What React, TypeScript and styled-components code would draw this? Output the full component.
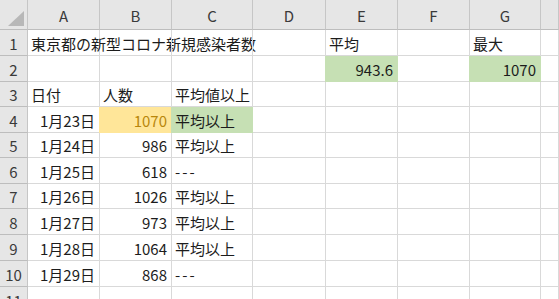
import React from "react";
import styled, { createGlobalStyle } from "styled-components";

const GlobalStyle = createGlobalStyle`
  html, body {
    margin: 0;
    padding: 0;
    background: #ffffff;
  }
  body {
    font-family: "Noto Sans CJK JP", "Noto Sans", sans-serif;
  }
`;

// row header + A..G, the H column takes whatever is left
const COLS = [28, 72, 72, 81, 73, 72, 72, 71];
const ROWS = [30, 26, 26, 25, 26, 25, 26, 25, 26, 26, 26, 26];
const LETTERS = ["A", "B", "C", "D", "E", "F", "G"];

const Sheet = styled.div`
  display: grid;
  grid-template-columns: ${COLS.map((c) => `${c}px`).join(" ")} 1fr;
  grid-template-rows: ${ROWS.map((r) => `${r}px`).join(" ")};
  width: 559px;
  height: 299px;
  overflow: hidden;
  color: #1c1c1c;
  font-size: 15px;
`;

const Head = styled.div`
  box-sizing: border-box;
  background: #e6e6e6;
  border-right: 1px solid #c6c6c6;
  border-bottom: 1px solid #bdbdbd;
  display: flex;
  align-items: center;
  justify-content: center;
  color: #3a3a3a;
  font-size: 15px;
  padding-top: 1px;
`;

const Corner = styled(Head)`
  position: relative;
  &::after {
    content: "";
    position: absolute;
    right: 3px;
    bottom: 3px;
    width: 0;
    height: 0;
    border-left: 16px solid transparent;
    border-bottom: 15px solid #b8b8b8;
  }
`;

type Tone = "green" | "yellow" | undefined;

const fills: Record<string, string> = {
  green: "#c6e0b4",
  yellow: "#ffe699",
};

const Cell = styled.div<{ $right?: boolean; $tone?: Tone; $dash?: boolean }>`
  box-sizing: border-box;
  border-right: 1px solid ${(p) => (p.$tone ? fills[p.$tone] : "#d9d9d9")};
  border-bottom: 1px solid ${(p) => (p.$tone ? fills[p.$tone] : "#d9d9d9")};
  background: ${(p) => (p.$tone ? fills[p.$tone] : "transparent")};
  box-shadow: ${(p) => (p.$tone ? `-1px 0 0 ${fills[p.$tone]}` : "none")};
  display: flex;
  align-items: center;
  justify-content: ${(p) => (p.$right ? "flex-end" : "flex-start")};
  padding: 1px ${(p) => (p.$right ? "4px" : "0")} 0 ${(p) => (p.$right ? "0" : "3px")};
  white-space: nowrap;
  letter-spacing: ${(p) => (p.$dash ? "2px" : "0")};
  color: ${(p) => (p.$tone === "yellow" ? "#b8860b" : "#1c1c1c")};
  position: relative;
  z-index: ${(p) => (p.$tone ? 1 : 0)};
`;

type CellData = { text?: string; right?: boolean; tone?: Tone };

const data: Record<number, Record<number, CellData>> = {
  1: { 0: { text: "東京都の新型コロナ新規感染者数" }, 4: { text: "平均" }, 6: { text: "最大" } },
  2: { 4: { text: "943.6", right: true, tone: "green" }, 6: { text: "1070", right: true, tone: "green" } },
  3: { 0: { text: "日付" }, 1: { text: "人数" }, 2: { text: "平均値以上" } },
};

const rowsData: [string, string, string][] = [
  ["1月23日", "1070", "平均以上"],
  ["1月24日", "986", "平均以上"],
  ["1月25日", "618", "---"],
  ["1月26日", "1026", "平均以上"],
  ["1月27日", "973", "平均以上"],
  ["1月28日", "1064", "平均以上"],
  ["1月29日", "868", "---"],
];

rowsData.forEach(([d, n, s], i) => {
  const r = i + 4;
  data[r] = {
    0: { text: d, right: true },
    1: { text: n, right: true, tone: r === 4 ? "yellow" : undefined },
    2: { text: s, tone: r === 4 ? "green" : undefined },
  };
});

export default function App() {
  const rowNums = Array.from({ length: 11 }, (_, i) => i + 1);
  return (
    <>
      <GlobalStyle />
      <Sheet>
        <Corner />
        {LETTERS.map((l) => (
          <Head key={l}>{l}</Head>
        ))}
        <Head />
        {rowNums.map((r) => (
          <React.Fragment key={r}>
            <Head>{r}</Head>
            {LETTERS.map((_, c) => {
              const cell = data[r]?.[c];
              return (
                <Cell
                  key={c}
                  $right={cell?.right}
                  $tone={cell?.tone}
                  $dash={cell?.text === "---"}
                >
                  {cell?.text}
                </Cell>
              );
            })}
            <Cell />
          </React.Fragment>
        ))}
      </Sheet>
    </>
  );
}
